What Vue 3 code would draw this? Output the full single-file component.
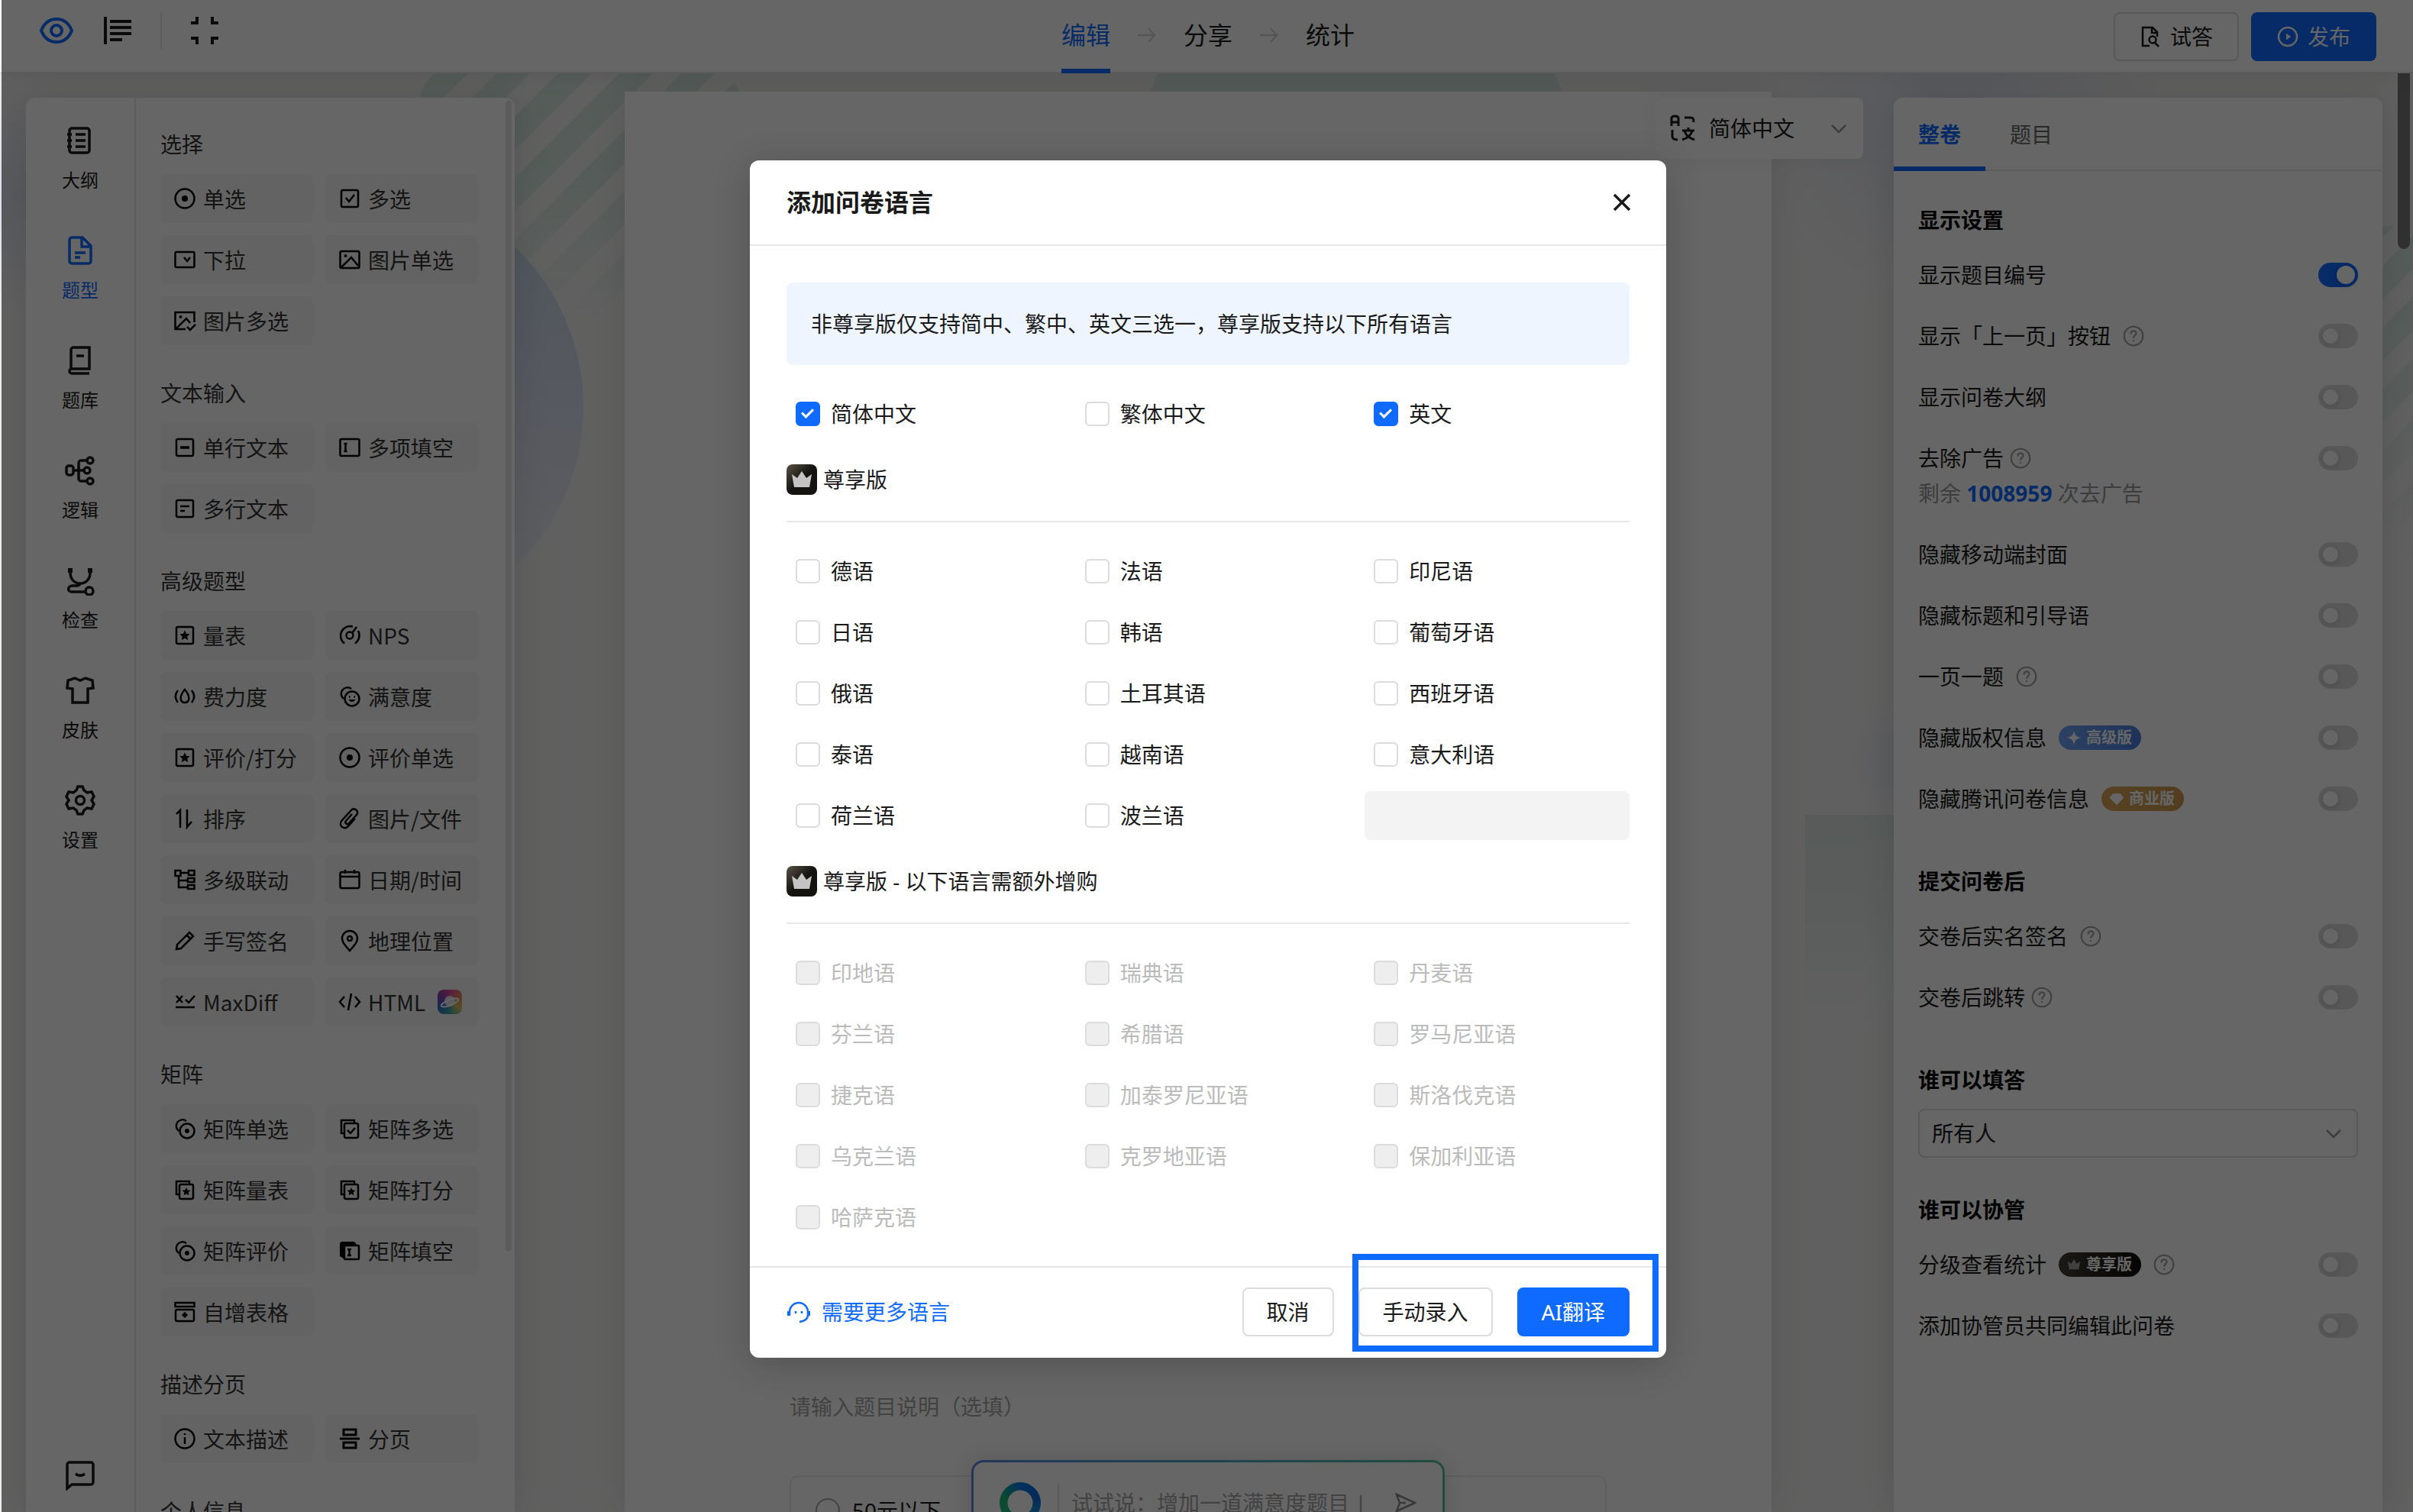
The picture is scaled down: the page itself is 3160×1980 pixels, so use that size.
<script setup>
import { ref } from 'vue'

const icons = {
  radio: '<circle cx="16" cy="16" r="12.5"/><circle cx="16" cy="16" r="4" fill="currentColor" stroke="none"/>',
  check: '<rect x="5" y="5" width="22" height="22" rx="2"/><path d="M11 15l4 5 7-9"/>',
  dropdown: '<rect x="3.500" y="6" width="25" height="20" rx="1.500"/><path d="M15 13l4 5 4-5"/>',
  image: '<rect x="3.500" y="5" width="25" height="22" rx="2"/><path d="M5 26l13-13 9 11"/><circle cx="10.500" cy="11" r="2" fill="currentColor" stroke="none"/>',
  images: '<path d="M17 27H3.500V5h25v13"/><path d="M5 26l13-13 5 6"/><path d="M19 24l4 4 7-7"/><circle cx="10.500" cy="11" r="2" fill="currentColor" stroke="none"/>',
  line: '<rect x="5" y="5" width="22" height="22" rx="2"/><path d="M10 16h12" stroke-width="3.500"/>',
  fill: '<rect x="3.500" y="5" width="25" height="22" rx="1.500"/><path d="M8.500 11h4M8.500 21h4M10.500 11v10"/>',
  lines: '<rect x="5" y="5" width="22" height="22" rx="2"/><path d="M10 13h12M10 19h6"/>',
  star: '<rect x="5" y="5" width="22" height="22" rx="2"/><path d="M16 9.500l2 4.300 4.700.5-3.500 3.200 1 4.700L16 19.800l-4.200 2.400 1-4.700-3.500-3.200 4.700-.5z" fill="currentColor" stroke="none"/>',
  nps: '<path d="M20 4.500A12.500 12.500 0 0 0 9 26.500M27 10a12.500 12.500 0 0 1-4 16.500"/><circle cx="16" cy="16" r="4.500"/><path d="M19 13l6-8"/>',
  effort: '<path d="M7 8c-4 5-4 11 0 16M25 8c4 5 4 11 0 16M16 7c-8 9-6 17 0 17s8-8 0-17z"/>',
  faces: '<circle cx="19" cy="19" r="9.500"/><path d="M8 19A8 8 0 1 1 18 6"/><path d="M14.500 20c1.500 4 7 4 9 0z" fill="currentColor" stroke="none"/><path d="M15 16.500h1.500M21.500 16.500h1.500"/>',
  sort: '<path d="M5 10l5-5v23M19 4v23l6-7"/>',
  clip: '<path d="M19 10l-8 9c-2 3 2 6 4 3l10-11c4-5-3-10-7-6L6 18c-6 7 3 14 8 8l9-10"/>',
  tree: '<rect x="3.500" y="4" width="7" height="7"/><rect x="21" y="4" width="7.500" height="6"/><rect x="20" y="14" width="8.500" height="5"/><rect x="20" y="23" width="8.500" height="5"/><path d="M10 7h11M8 11v15h12M8 17h12"/>',
  calendar: '<rect x="3.500" y="6" width="25" height="21" rx="2"/><path d="M4 12h24M10 3v5M22 3v5"/>',
  pen: '<path d="M5 27l1-6L22 5l5 5L11 26z"/><path d="M19 9l4 4"/>',
  pin: '<path d="M16 29C8 20 6 17 6 13a10 10 0 0 1 20 0c0 4-2 7-10 16z"/><circle cx="16" cy="13" r="3"/>',
  maxdiff: '<path d="M5 8l8 9M13 8l-8 9M17 13l4 4 8-9M4 23h25"/>',
  code: '<path d="M9 9l-6 7 6 7M23 9l6 7-6 7M18 5l-4 22"/>',
  mradio: '<circle cx="19" cy="19" r="9.500"/><circle cx="19" cy="19" r="3" fill="currentColor" stroke="none"/><path d="M8 19A8 8 0 1 1 18 6"/>',
  mcheck: '<rect x="9" y="9" width="18" height="19" rx="2"/><path d="M8 22H5V5h17v4M13 18l4 4 6-7"/>',
  mstar: '<rect x="9" y="9" width="18" height="19" rx="2"/><path d="M8 22H5V5h17v4"/><path d="M18 13l1.600 3.400 3.800.4-2.800 2.600.8 3.800L18 21.300l-3.400 1.900.8-3.800-2.800-2.600 3.800-.4z" fill="currentColor" stroke="none"/>',
  mfill: '<path d="M3 23V6l2-2h17l4 5H10v17H8z" fill="currentColor" stroke="none"/><rect x="9" y="9" width="19" height="18" rx="1"/><path d="M13 14h5M13 22h5M15.500 14v8"/>',
  table: '<rect x="3.500" y="4" width="25" height="5"/><rect x="4" y="13" width="24" height="15" rx="2"/><path d="M16 16.500v7M12.500 20h7" stroke-width="3"/>',
  info: '<circle cx="16" cy="16" r="12.500"/><path d="M16 14v9M16 9v2"/>',
  split: '<path d="M8 11V4h16v7zM8 28v-7h16v7zM3 16h26" stroke-width="3"/>',
  outline: '<path d="M9 4h20a3 3 0 0 1 3 3v26a3 3 0 0 1-3 3H9a3 3 0 0 1-3-3V7a3 3 0 0 1 3-3zM3 12h6M3 20h6M3 28h6M14 12h13M14 20h13M14 28h13"/>',
  doc: '<path d="M23 3H9a3 3 0 0 0-3 3v28a3 3 0 0 0 3 3h22a3 3 0 0 0 3-3V14zM22 4v11h11M13 23h14M13 29h7"/>',
  book: '<path d="M8 30V6a3 3 0 0 1 3-3h21v28H9a3 3 0 0 0 0 6h23"/><path d="M15 14h10"/>',
  logic: '<rect x="2" y="14" width="9" height="12" rx="3"/><circle cx="33" cy="7" r="4"/><circle cx="29" cy="20" r="4"/><circle cx="33" cy="34" r="4"/><path d="M11 20h14M29 7h-7c-3 0-4 1-4 4v19c0 3 1 4 4 4h7"/>',
  stetho: '<path d="M7 4v6c0 9 6 14 13 14s13-5 13-14V4M21 24c-3 4-6 3-11 3-7 0-7 8-1 8h17"/><circle cx="32" cy="34" r="5"/><path d="M7 4v6M33 4v6" stroke-width="6"/>',
  shirt: '<path d="M13 4l7 3 7-3 9 3 1 10-7 1v18H10V18l-7-1L4 7z"/>',
  gear: '<path d="M17 2h6l2 5 4 3 6-1 3 6-3 5 3 5-3 6-6-1-4 3-2 5h-6l-2-5-4-3-6 1-3-6 3-5-3-5 3-6 6 1 4-3z"/><circle cx="20" cy="20" r="5.500"/>',
  chat: '<path d="M3 37V6a3 3 0 0 1 3-3h28a3 3 0 0 1 3 3v23a3 3 0 0 1-3 3H9z"/><path d="M14 18c4 3 8 3 12 0"/>',
  crown: '<path d="M3 9l7 5 6-9 6 9 7-5-3 17H6z" fill="currentColor" stroke="none"/>',
  spark: '<path d="M16 1c2 10 5 13 15 15-10 2-13 5-15 15-2-10-5-13-15-15C11 14 14 11 16 1z" fill="currentColor" stroke="none"/>',
  gem: '<path d="M8 5h16l7 9-15 15L1 14z" fill="currentColor" stroke="none"/>',
  help: '<circle cx="16" cy="16" r="14"/><path d="M12 13c0-6 8-6 8-1 0 3-4 3-4 7M16 22v2"/>'
}

const nav = [
  ['outline', '大纲'], ['doc', '题型'], ['book', '题库'], ['logic', '逻辑'],
  ['stetho', '检查'], ['shirt', '皮肤'], ['gear', '设置']
]

const groups = [
  { title: '选择', items: [['radio', '单选'], ['check', '多选'], ['dropdown', '下拉'], ['image', '图片单选'], ['images', '图片多选']] },
  { title: '文本输入', items: [['line', '单行文本'], ['fill', '多项填空'], ['lines', '多行文本']] },
  {
    title: '高级题型',
    items: [
      ['star', '量表'], ['nps', 'NPS'], ['effort', '费力度'], ['faces', '满意度'], ['star', '评价/打分'], ['radio', '评价单选'],
      ['sort', '排序'], ['clip', '图片/文件'], ['tree', '多级联动'], ['calendar', '日期/时间'], ['pen', '手写签名'], ['pin', '地理位置'],
      ['maxdiff', 'MaxDiff'], ['code', 'HTML']
    ]
  },
  {
    title: '矩阵',
    items: [
      ['mradio', '矩阵单选'], ['mcheck', '矩阵多选'], ['mstar', '矩阵量表'], ['mstar', '矩阵打分'],
      ['mradio', '矩阵评价'], ['mfill', '矩阵填空'], ['table', '自增表格']
    ]
  },
  { title: '描述分页', items: [['info', '文本描述'], ['split', '分页']] },
  { title: '个人信息', items: [] }
]

const settings = ref([
  {
    title: '显示设置',
    rows: [
      { text: '显示题目编号', on: true },
      { text: '显示「上一页」按钮', help: true, wide: true },
      { text: '显示问卷大纲' },
      { text: '去除广告', help: true, quota: '1008959' },
      { text: '隐藏移动端封面' },
      { text: '隐藏标题和引导语' },
      { text: '一页一题', help: true, wide: true },
      { text: '隐藏版权信息', badge: '高级版', icon: 'spark', tone: 'sky' },
      { text: '隐藏腾讯问卷信息', badge: '商业版', icon: 'gem', tone: 'gold' }
    ]
  },
  { title: '提交问卷后', rows: [{ text: '交卷后实名签名', help: true, wide: true }, { text: '交卷后跳转', help: true }] },
  { title: '谁可以填答', rows: [], select: true },
  {
    title: '谁可以协管',
    rows: [{ text: '分级查看统计', badge: '尊享版', icon: 'crown', tone: 'dark', help: true, wide: true }, { text: '添加协管员共同编辑此问卷' }]
  }
])

const basic = ref([{ text: '简体中文', on: true }, { text: '繁体中文', on: false }, { text: '英文', on: true }])
const premium = ref(['德语', '法语', '印尼语', '日语', '韩语', '葡萄牙语', '俄语', '土耳其语', '西班牙语', '泰语', '越南语', '意大利语', '荷兰语', '波兰语'].map((text) => ({ text, on: false })))
const extra = ['印地语', '瑞典语', '丹麦语', '芬兰语', '希腊语', '罗马尼亚语', '捷克语', '加泰罗尼亚语', '斯洛伐克语', '乌克兰语', '克罗地亚语', '保加利亚语', '哈萨克语']
</script>

<template>
  <div class="app">
    <header class="topbar">
      <div class="tools">
        <button class="tool blue" aria-label="预览">
          <svg width="46" height="36" viewBox="0 0 46 36"><path d="M2 18C6 8 13 3 22 3s16 5 20 15c-4 10-11 15-20 15S6 28 2 18z" /><circle cx="22" cy="18" r="7" /></svg>
        </button>
        <button class="tool" aria-label="大纲视图">
          <svg width="36" height="36" viewBox="0 0 36 36"><path d="M2 0v36M8 6h28M8 14h28M8 22h28M8 30h16" /></svg>
        </button>
        <span class="tool-divider"></span>
        <button class="tool" aria-label="退出全屏">
          <svg width="36" height="36" viewBox="0 0 36 36"><path d="M0 8h8V0M28 0v8h8M0 28h8v8M28 36v-8h8" /></svg>
        </button>
      </div>
      <nav class="steps">
        <a href="#" class="step current">编辑</a>
        <svg class="arrow" width="24" height="24" viewBox="0 0 24 24"><path d="M0 12h22M14 3l8 9-8 9" /></svg>
        <a href="#" class="step">分享</a>
        <svg class="arrow" width="24" height="24" viewBox="0 0 24 24"><path d="M0 12h22M14 3l8 9-8 9" /></svg>
        <a href="#" class="step">统计</a>
      </nav>
      <div class="top-actions">
        <button class="btn">
          <svg width="28" height="28" viewBox="0 0 28 28"><path d="M13 26H4V2h13l6 6v6M16 2v7h7" /><circle cx="17" cy="18" r="4.500" /><path d="M20 22l5 5" /></svg>试答
        </button>
        <button class="btn solid">
          <svg width="28" height="28" viewBox="0 0 28 28"><circle cx="14" cy="14" r="12" /><path d="M12 9.500v9l6-4.500z" fill="currentColor" stroke="none" /></svg>发布
        </button>
      </div>
    </header>

    <div class="workspace">
      <svg class="backdrop" width="100%" height="100%" aria-hidden="true">
        <defs>
          <pattern id="stripes" width="57" height="57" patternUnits="userSpaceOnUse" patternTransform="translate(650 0) rotate(45)">
            <rect width="31" height="57" fill="#d4e6de" />
          </pattern>
          <linearGradient id="fadeLeft" gradientUnits="userSpaceOnUse" x1="0" y1="120" x2="0" y2="330"><stop offset="0" stop-color="#fff" /><stop offset="1" stop-color="#000" /></linearGradient>
          <linearGradient id="fadeRight" gradientUnits="userSpaceOnUse" x1="0" y1="300" x2="0" y2="640"><stop offset="0" stop-color="#fff" /><stop offset="1" stop-color="#000" /></linearGradient>
          <mask id="maskLeft"><circle cx="760" cy="110" r="225" fill="url(#fadeLeft)" /></mask>
          <mask id="maskRight" maskUnits="userSpaceOnUse" x="3000" y="200" width="200" height="500"><path d="M3000 100l198 198v400h-198z" fill="url(#fadeRight)" /></mask>
          <linearGradient id="disc" x1="0" y1="0" x2="0" y2="1"><stop offset="0" stop-color="#c3d2e4" /><stop offset="0.500" stop-color="#d9dff0" /><stop offset="1" stop-color="#ebecef" /></linearGradient>
          <linearGradient id="block" x1="0" y1="0" x2="0" y2="1"><stop offset="0" stop-color="#dae3e1" /><stop offset="1" stop-color="#eff0ef" /></linearGradient>
          <radialGradient id="haze"><stop offset="0" stop-color="#dcdfec" /><stop offset="1" stop-color="#dcdfec" stop-opacity="0" /></radialGradient>
        </defs>
        <ellipse cx="20" cy="160" rx="120" ry="150" fill="url(#haze)" />
        <rect x="500" y="0" width="520" height="360" fill="url(#stripes)" mask="url(#maskLeft)" />
        <circle cx="474" cy="437" r="290" fill="url(#disc)" />
        <path d="M1516 0h520l12 30h-544z" fill="#d5e6de" />
        <ellipse cx="2560" cy="60" rx="270" ry="260" fill="url(#haze)" />
        <ellipse cx="2520" cy="900" rx="100" ry="100" fill="url(#haze)" />
        <rect x="2364" y="971" width="180" height="280" fill="url(#block)" />
        <g transform="translate(62 0)"><rect x="3000" y="200" width="160" height="440" fill="url(#stripes)" mask="url(#maskRight)" /></g>
      </svg>

      <aside class="panel library">
        <nav class="side">
          <a v-for="n in nav" :key="n[1]" href="#" class="side-link" :class="{ current: n[1] === '题型' }">
            <svg width="40" height="40" viewBox="0 0 40 40" v-html="icons[n[0]]"></svg>
            <span>{{ n[1] }}</span>
          </a>
          <button class="feedback" aria-label="反馈"><svg width="40" height="40" viewBox="0 0 40 40" v-html="icons.chat"></svg></button>
        </nav>
        <div class="types">
          <section v-for="g in groups" :key="g.title">
            <h3>{{ g.title }}</h3>
            <div class="type-grid">
              <button v-for="t in g.items" :key="t[1]" class="type">
                <svg width="32" height="32" viewBox="0 0 32 32" v-html="icons[t[0]]"></svg>{{ t[1] }}
                <span v-if="t[1] === 'HTML'" class="lab"><svg width="32" height="32" viewBox="0 0 32 32"><circle cx="16" cy="15" r="7" fill="#e4e4ee" stroke="none" /><ellipse cx="16" cy="17" rx="12" ry="3.500" transform="rotate(-22 16 17)" stroke="#fff" stroke-width="2" /></svg></span>
              </button>
            </div>
          </section>
          <span class="thumb"></span>
        </div>
      </aside>

      <main class="canvas">
        <div class="lang">
          <svg class="lang-icon" width="36" height="36" viewBox="0 0 36 36"><path d="M3 15V5c0-4 9-4 9 0v10M3 10h9M20 4h8c3 0 4 1 4 6M4 20v8c0 4 2 5 7 5M17 21h16M25 17v4M20 21c1 6 7 10 13 12M30 21c-1 6-7 10-13 12" /></svg>
          <select aria-label="问卷语言"><option>简体中文</option></select>
          <svg class="chev" width="20" height="20" viewBox="0 0 20 20"><path d="M1 6l9 9 9-9" /></svg>
        </div>
        <div class="question">
          <p class="desc">请输入题目说明（选填）</p>
          <label class="option"><input type="radio" name="price" />50元以下</label>
        </div>
        <div class="ask">
          <span class="ring"></span>
          <input type="text" aria-label="AI 助手" placeholder="试试说：增加一道满意度题目 |" />
          <button aria-label="发送"><svg width="28" height="28" viewBox="0 0 28 28"><path d="M2 3l24 11L2 25l4-11zM6 14h8" /></svg></button>
        </div>
      </main>

      <aside class="panel config">
        <div class="tabs">
          <button class="tab current">整卷</button>
          <button class="tab">题目</button>
        </div>
        <section v-for="s in settings" :key="s.title" class="group" :class="{ compact: s.select }">
          <h3>{{ s.title }}</h3>
          <div v-if="s.select" class="who">
            <select aria-label="谁可以填答"><option>所有人</option></select>
            <svg class="chev" width="20" height="20" viewBox="0 0 20 20"><path d="M1 6l9 9 9-9" /></svg>
          </div>
          <template v-for="r in s.rows" :key="r.text">
            <label class="row">
              <span class="name" :class="{ wide: r.wide || r.badge }">
                {{ r.text }}
                <span v-if="r.badge" class="badge" :class="r.tone"><svg width="20" height="20" viewBox="0 0 32 32" v-html="icons[r.icon]"></svg>{{ r.badge }}</span>
                <svg v-if="r.help" class="help" width="28" height="28" viewBox="0 0 32 32" v-html="icons.help"></svg>
              </span>
              <input v-model="r.on" type="checkbox" role="switch" class="switch" />
            </label>
            <p v-if="r.quota" class="quota">剩余 <b>{{ r.quota }}</b> 次去广告</p>
          </template>
        </section>
      </aside>

      <span class="page-thumb"></span>
    </div>

    <div class="overlay">
      <div class="modal" role="dialog" aria-modal="true" aria-labelledby="dlg-title">
        <header class="modal-head">
          <h2 id="dlg-title">添加问卷语言</h2>
          <button class="close" aria-label="关闭"><svg width="24" height="24" viewBox="0 0 24 24"><path d="M2 2l20 20M22 2L2 22" /></svg></button>
        </header>
        <div class="modal-body">
          <p class="notice">非尊享版仅支持简中、繁中、英文三选一，尊享版支持以下所有语言</p>
          <div class="langs">
            <label v-for="l in basic" :key="l.text" class="pick"><input v-model="l.on" type="checkbox" />{{ l.text }}</label>
          </div>
          <h3 class="tier"><span class="crown"><svg width="32" height="32" viewBox="0 0 32 32" v-html="icons.crown"></svg></span>尊享版</h3>
          <div class="langs">
            <label v-for="l in premium" :key="l.text" class="pick"><input v-model="l.on" type="checkbox" />{{ l.text }}</label>
            <span class="placeholder"></span>
          </div>
          <h3 class="tier"><span class="crown"><svg width="32" height="32" viewBox="0 0 32 32" v-html="icons.crown"></svg></span>尊享版 - 以下语言需额外增购</h3>
          <div class="langs">
            <label v-for="l in extra" :key="l" class="pick off"><input type="checkbox" disabled />{{ l }}</label>
          </div>
        </div>
        <footer class="modal-foot">
          <a href="#" class="more">
            <svg width="32" height="32" viewBox="0 0 32 32"><path d="M4 20v-4a12 12 0 0 1 24 0v4c0 5-4 8-11 9" /><path d="M3 15v6M29 15v6" stroke-width="4" /><path d="M12 15v3M20 15v3" /></svg>需要更多语言
          </a>
          <button class="btn">取消</button>
          <div class="marked">
            <button class="btn">手动录入</button>
            <button class="btn solid">AI翻译</button>
            <span class="marker"></span>
          </div>
        </footer>
      </div>
    </div>
  </div>
</template>

<style>
body {
  margin: 0;
  overflow: hidden;
}
</style>

<style scoped>
.app {
  --blue: #0f6bff;
  --line: #e7e7e7;
  position: relative;
  display: flex;
  flex-direction: column;
  height: 100vh;
  overflow: hidden;
  background: #f0f0ef;
  color: #1a1a1a;
  font-family: 'Noto Sans', 'Noto Sans CJK SC', sans-serif;
  font-size: 28px;
  line-height: 44px;
}
.app *,
.app *::after {
  box-sizing: border-box;
}
h2, h3, p {
  margin: 0;
  font-weight: 400;
}
h3 {
  font-size: 28px;
}
a {
  color: inherit;
  text-decoration: none;
}
button, select, input {
  margin: 0;
  padding: 0;
  border: 0;
  background: none;
  color: inherit;
  font: inherit;
}
svg {
  flex: none;
  fill: none;
  stroke: currentColor;
  stroke-width: 2.5;
}
.topbar {
  position: relative;
  z-index: 1;
  display: grid;
  grid-template-columns: 1fr auto 1fr;
  flex: none;
  height: 96px;
  padding: 0 48px 0 52px;
  border-bottom: 2px solid #e4e4e4;
  background: #fff;
  box-shadow: 0 0 32px rgba(0, 0, 0, 0.1);
}
.tools {
  display: flex;
  align-items: center;
  gap: 38px;
  height: 80px;
}
.tool {
  display: flex;
}
.tool svg {
  stroke-width: 4;
}
.blue {
  color: var(--blue);
}
.tool-divider {
  width: 2px;
  height: 48px;
  background: var(--line);
}
.steps {
  display: flex;
  gap: 36px;
  font-size: 32px;
}
.step {
  height: 96px;
  line-height: 92px;
}
.step.current {
  border-bottom: 6px solid var(--blue);
  color: var(--blue);
}
.arrow {
  margin-top: 34px;
  color: #d4d4d4;
}
.top-actions {
  display: flex;
  justify-content: flex-end;
  gap: 16px;
  padding-top: 16px;
}
.btn {
  display: flex;
  align-items: center;
  gap: 12px;
  height: 64px;
  padding: 0 30px;
  border: 2px solid #dcdcdc;
  border-radius: 8px;
  background: #fff;
}
.top-actions .btn {
  padding: 0 32px;
}
.btn.solid {
  border-color: var(--blue);
  background: var(--blue);
  color: #fff;
}
.workspace {
  position: relative;
  display: flex;
  flex: 1;
  align-items: stretch;
  min-height: 0;
  padding: 24px 40px 0 34px;
}
.backdrop {
  position: absolute;
  inset: 0;
  stroke: none;
}
.panel {
  position: relative;
  flex: none;
  width: 640px;
  margin-top: 8px;
  border-radius: 12px 12px 0 0;
  background: #fff;
  box-shadow: 0 0 48px rgba(0, 0, 0, 0.12);
  overflow: hidden;
}
.library {
  display: flex;
}
.side {
  display: flex;
  flex-direction: column;
  flex: none;
  align-items: center;
  width: 144px;
  border-right: 2px solid var(--line);
  padding: 36px 0 28px;
}
.side-link {
  display: flex;
  flex-direction: column;
  align-items: center;
  gap: 12px;
  height: 144px;
  font-size: 24px;
  line-height: 40px;
}
.side svg {
  stroke-width: 3.5;
}
.side-link.current {
  color: var(--blue);
}
.feedback {
  display: flex;
  margin-top: auto;
}
.types {
  position: relative;
  flex: 1;
  padding: 38px 48px 0 32px;
  color: #333;
  font-family: 'Noto Sans CJK SC', sans-serif;
}
.types section {
  margin-bottom: 40px;
}
.type-grid {
  display: grid;
  grid-template-columns: 1fr 1fr;
  gap: 16px;
  margin-top: 18px;
}
.type {
  display: flex;
  align-items: center;
  gap: 8px;
  height: 64px;
  padding-left: 16px;
  border-radius: 8px;
  background: #f7f7f7;
  white-space: nowrap;
}
.type > svg {
  color: #000;
}
.lab {
  display: flex;
  margin-left: 8px;
  border-radius: 8px;
  background: conic-gradient(from 0deg, #d94a9a, #f08060, #d8c060, #40a8a0, #3070d0, #8040b0, #d94a9a);
}
.thumb {
  position: absolute;
  top: 4px;
  right: 4px;
  width: 8px;
  height: 1506px;
  border-radius: 4px;
  background: #e3e3e3;
}
.canvas {
  position: relative;
  display: flex;
  flex: 1;
  flex-direction: column;
  margin: 0 160px 0 144px;
  background: #fff;
  box-shadow: 0 0 48px rgba(0, 0, 0, 0.1);
}
.lang {
  position: absolute;
  top: 8px;
  right: -120px;
  width: 272px;
  border-radius: 8px;
  background: #fff;
  box-shadow: 0 0 32px rgba(0, 0, 0, 0.06);
}
.lang select {
  width: 100%;
  height: 80px;
  padding-left: 70px;
  appearance: none;
}
.lang-icon {
  position: absolute;
  top: 22px;
  left: 18px;
  stroke-width: 3;
}
.chev {
  position: absolute;
  top: 50%;
  right: 22px;
  margin-top: -10px;
  color: #999;
  pointer-events: none;
}
.question {
  margin: 1700px 216px 0;
}
.desc {
  color: #a6a6a6;
}
.option {
  display: flex;
  align-items: center;
  gap: 16px;
  height: 92px;
  margin-top: 68px;
  padding: 0 32px;
  border: 2px solid #ededed;
  border-radius: 12px;
}
.option input {
  width: 32px;
  height: 32px;
  border: 2px solid #a6a6a6;
  border-radius: 50%;
  appearance: none;
}
.ask {
  position: absolute;
  top: 1792px;
  left: 50%;
  display: flex;
  align-items: center;
  width: 620px;
  height: 112px;
  margin-left: -297px;
  padding: 0 34px;
  border: 3px solid transparent;
  border-radius: 16px;
  background: linear-gradient(#fff, #fff) padding-box, linear-gradient(90deg, #5b86e0, #4ea9c9, #4fbf9a) border-box;
  box-shadow: 0 0 32px rgba(0, 0, 0, 0.14);
}
.ring {
  flex: none;
  width: 54px;
  height: 54px;
  border-radius: 50%;
  background: radial-gradient(circle, #fff 16px, transparent 17px), conic-gradient(from 0deg, #0a78e8, #0a6ae0, #18a0d8, #1cc08a, #18b874, #0a78e8);
}
.ask input {
  flex: 1;
  width: 0;
  height: 48px;
  margin-left: 22px;
  padding-left: 16px;
  border-left: 2px solid #e0e0e0;
}
.ask input::placeholder {
  color: #a6a6a6;
  opacity: 1;
}
.ask button {
  display: flex;
  color: #8a8a8a;
}
.tabs {
  display: flex;
  border-bottom: 2px solid var(--line);
}
.tab {
  width: 120px;
  height: 96px;
  margin-bottom: -2px;
  color: #666;
}
.tab.current {
  border-bottom: 6px solid var(--blue);
  padding-top: 6px;
  color: var(--blue);
  font-weight: 700;
}
.group {
  padding: 42px 32px 0;
}
.group + .group {
  padding-top: 46px;
}
.group h3 {
  margin-bottom: 10px;
  color: #000;
  font-weight: 700;
}
.group.compact h3 {
  margin-bottom: 16px;
}
.row {
  display: flex;
  align-items: center;
  justify-content: space-between;
  height: 80px;
}
.name {
  display: flex;
  align-items: center;
  gap: 8px;
}
.name.wide {
  gap: 16px;
}
.help {
  color: #a0a0a0;
}
.switch {
  position: relative;
  width: 52px;
  height: 32px;
  border-radius: 16px;
  background: #dcdcdc;
  appearance: none;
}
.switch::after {
  content: '';
  position: absolute;
  top: 6px;
  left: 6px;
  width: 20px;
  height: 20px;
  border-radius: 50%;
  background: #fff;
  box-shadow: 0 2px 8px rgba(0, 0, 0, 0.15);
}
.switch:checked {
  background: var(--blue);
}
.switch:checked::after {
  top: 4px;
  left: 24px;
  width: 24px;
  height: 24px;
}
.quota {
  margin: -6px 0 28px;
  line-height: 24px;
  color: #999;
}
.quota b {
  color: var(--blue);
}
.badge {
  display: flex;
  align-items: center;
  gap: 6px;
  height: 32px;
  padding: 0 12px 0 10px;
  border-radius: 16px;
  color: #fff;
  font-size: 20px;
  font-weight: 700;
}
.badge.sky {
  background: linear-gradient(90deg, #6fa2f5, #4a7fe0);
}
.badge.gold {
  background: linear-gradient(90deg, #d8a458, #cf9850);
}
.badge.dark {
  background: linear-gradient(90deg, #453e35, #0c0c0a);
}
.badge.dark svg {
  color: #a0a0a0;
}
.who {
  position: relative;
}
.who select {
  width: 100%;
  height: 64px;
  padding-left: 16px;
  border: 2px solid #dcdcdc;
  border-radius: 8px;
  appearance: none;
}
.page-thumb {
  position: absolute;
  top: 0;
  right: 4px;
  width: 16px;
  height: 230px;
  border-radius: 0 0 8px 8px;
  background: #787878;
}
.overlay {
  position: absolute;
  inset: 0 0 0 2px;
  z-index: 2;
  display: flex;
  align-items: flex-start;
  justify-content: center;
  padding: 210px 0 0 2px;
  background: rgba(0, 0, 0, 0.6);
}
.modal {
  width: 1200px;
  border-radius: 12px;
  background: #fff;
  box-shadow: 0 8px 48px rgba(0, 0, 0, 0.2);
}
.modal-head {
  display: flex;
  align-items: center;
  justify-content: space-between;
  height: 112px;
  padding: 0 46px 0 48px;
  border-bottom: 2px solid var(--line);
}
.modal-head h2 {
  font-size: 32px;
  font-weight: 700;
}
.close {
  display: flex;
}
.close svg {
  stroke-width: 3.5;
}
.modal-body {
  padding: 48px 48px 32px;
}
.notice {
  margin-bottom: 32px;
  padding: 32px;
  border-radius: 8px;
  background: #eff5ff;
}
.langs {
  display: grid;
  grid-template-columns: repeat(3, 1fr);
  gap: 16px 32px;
}
.pick {
  display: flex;
  align-items: center;
  gap: 14px;
  height: 64px;
  padding: 0 12px;
}
.pick.off {
  color: #bbb;
}
.pick input {
  position: relative;
  width: 32px;
  height: 32px;
  border: 2px solid #dcdcdc;
  border-radius: 6px;
  appearance: none;
}
.pick input:checked {
  border-color: var(--blue);
  background: var(--blue);
}
.pick input:checked::after {
  content: '';
  position: absolute;
  top: 4px;
  left: 9px;
  width: 9px;
  height: 15px;
  border: solid #fff;
  border-width: 0 3px 3px 0;
  transform: rotate(45deg);
}
.pick input:disabled {
  background: #eee;
}
.placeholder {
  border-radius: 8px;
  background: #f3f3f3;
}
.tier {
  display: flex;
  align-items: center;
  gap: 8px;
  margin: 32px 0;
  padding-bottom: 32px;
  border-bottom: 2px solid var(--line);
}
.crown {
  display: flex;
  margin: 2px 0;
  padding: 4px;
  border-radius: 8px;
  background: linear-gradient(135deg, #5a5145, #14130f 50%);
  color: #c4c4c4;
}
.modal-foot {
  display: flex;
  align-items: center;
  gap: 32px;
  padding: 26px 48px 28px;
  border-top: 2px solid var(--line);
}
.more {
  display: flex;
  align-items: center;
  gap: 14px;
  margin-right: auto;
  color: var(--blue);
}
.marked {
  position: relative;
  display: flex;
  gap: 32px;
}
.marker {
  position: absolute;
  inset: -44px -38px -20px -8px;
  border: 8px solid var(--blue);
  pointer-events: none;
}
</style>
